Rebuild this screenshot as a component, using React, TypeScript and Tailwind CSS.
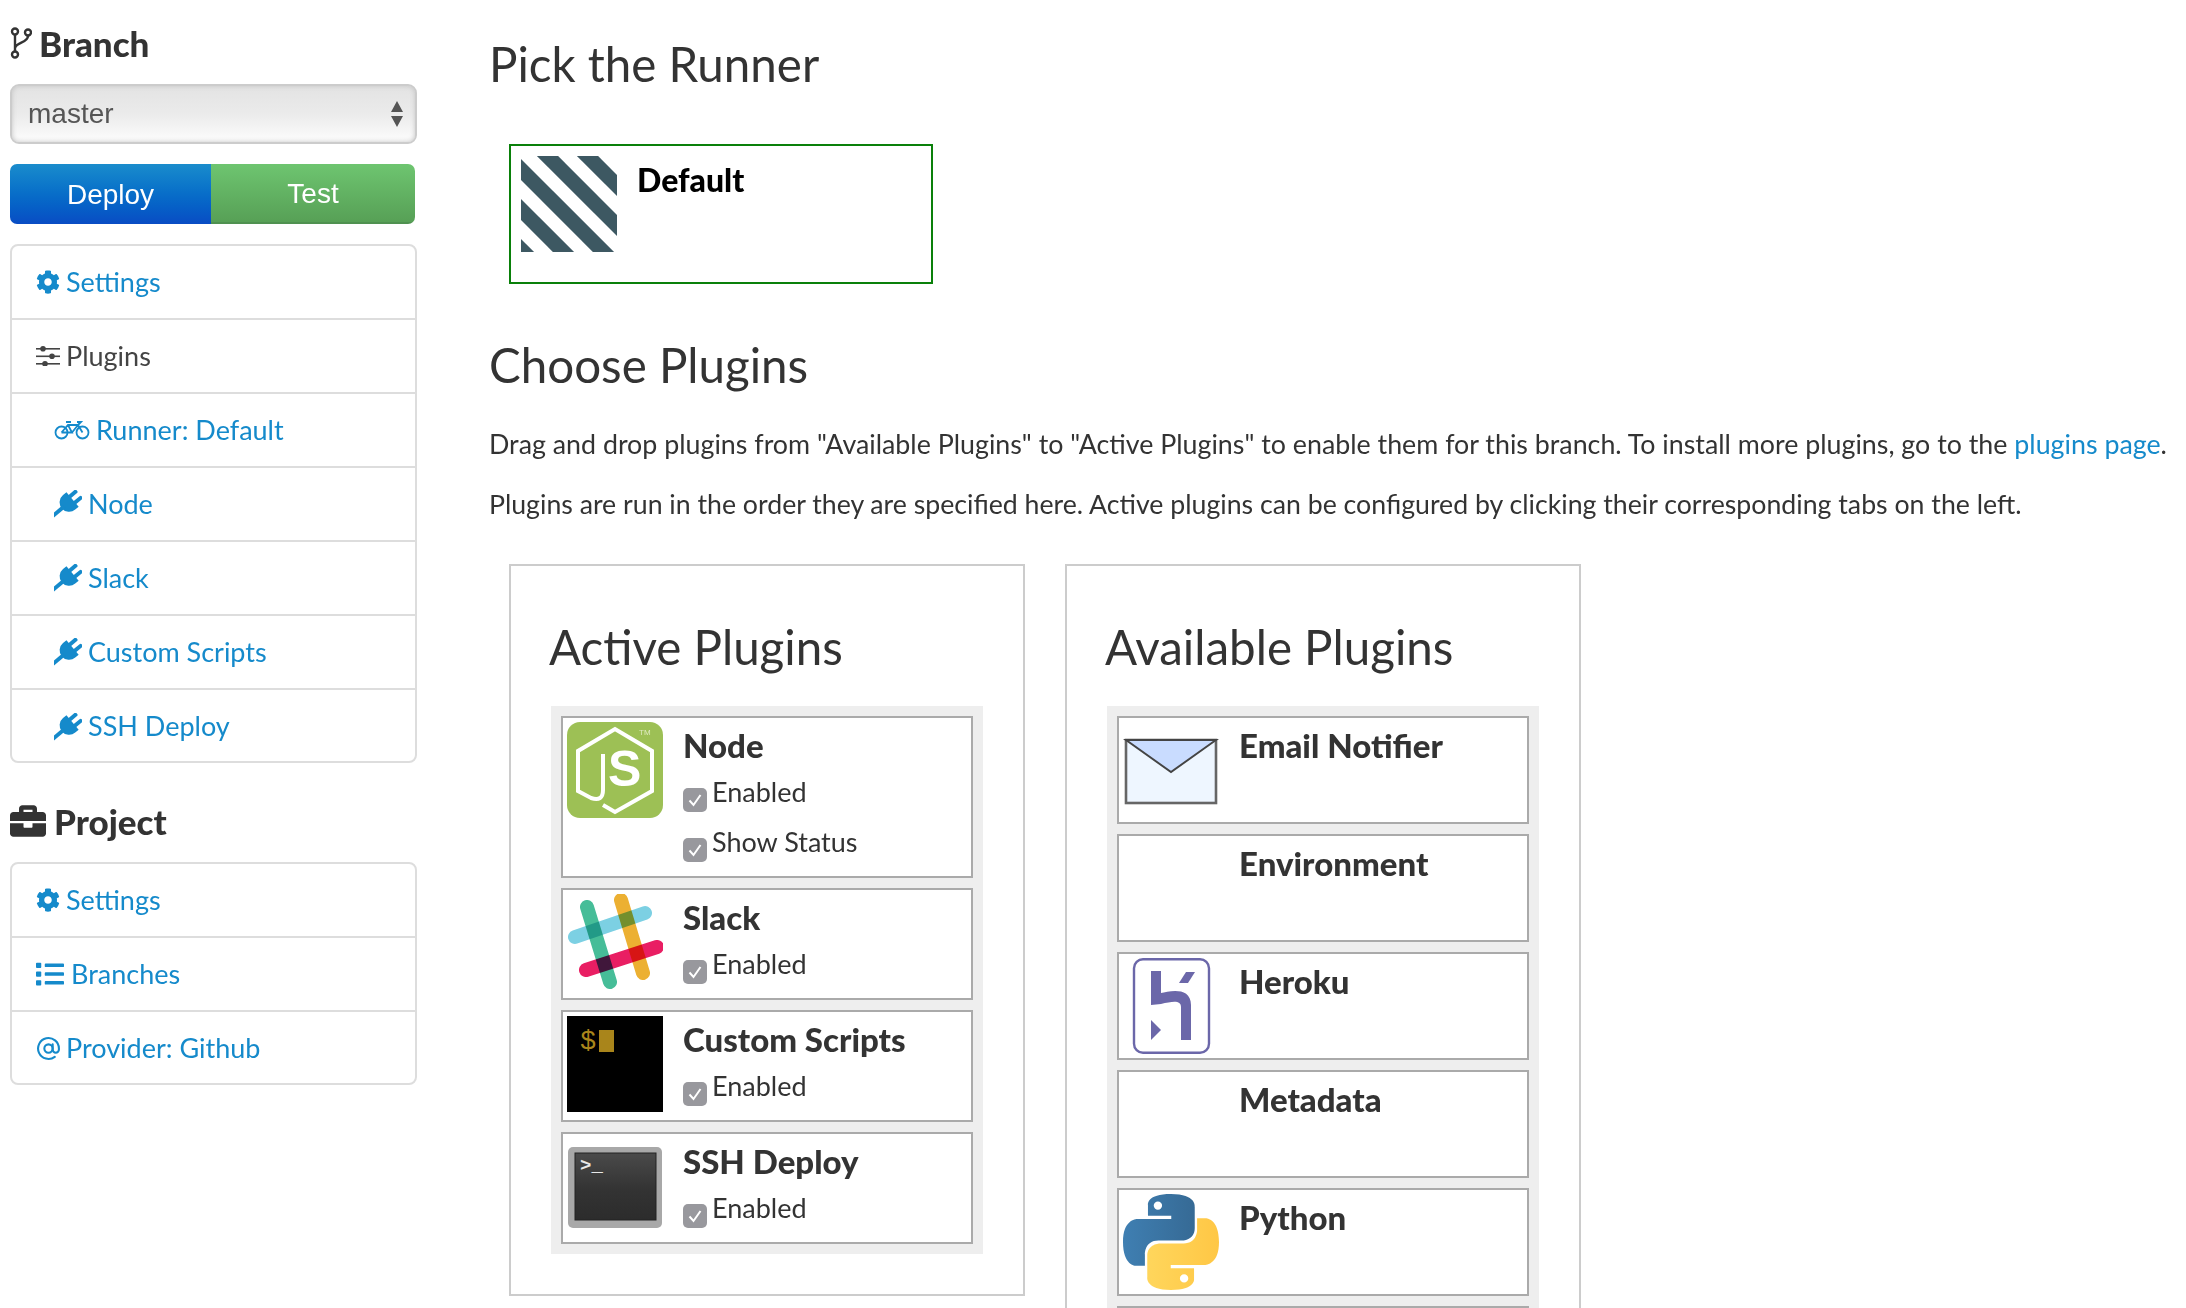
import { ReactNode } from "react";
import { FaBriefcase, FaCog, FaList } from "react-icons/fa";
import { AtSign } from "lucide-react";

const BranchIcon = () => (
  <svg width="22" height="32" viewBox="0 0 22 32" fill="none" stroke="#333" strokeWidth="2.4" className="shrink-0">
    <circle cx="5" cy="4.5" r="3" />
    <circle cx="18" cy="5.5" r="3" />
    <circle cx="5" cy="27.5" r="3" />
    <path d="M5 8V24M18 9C18 16 6 15 5 21" />
  </svg>
);

const SlidersIcon = () => (
  <svg width="24" height="20" viewBox="0 0 24 20" className="shrink-0" fill="#444">
    <rect x="0" y="2" width="24" height="1.6" />
    <rect x="0" y="9.5" width="24" height="1.6" />
    <rect x="0" y="17" width="24" height="1.6" />
    <circle cx="7" cy="2.8" r="2.8" />
    <circle cx="16" cy="10.3" r="2.8" />
    <circle cx="9" cy="17.8" r="2.8" />
  </svg>
);

const BikeIcon = () => (
  <svg width="36" height="20" viewBox="0 0 36 20" fill="none" stroke="#158acb" strokeWidth="1.8" className="shrink-0">
    <circle cx="7.5" cy="12.5" r="6" />
    <circle cx="28.5" cy="12.5" r="6" />
    <path d="M7.5 12.5L14 5H24L28.5 12.5M14 5L18 12.5H7.5M18 12.5L24 5M12 2H17M23 2H27L24 5" />
  </svg>
);

const PlugIcon = () => (
  <svg width="28" height="28" viewBox="0 0 28 28" fill="#158acb" className="shrink-0">
    <g transform="translate(15.5 12) rotate(50)">
      <path d="M-9.5 -4H9.5V0.5A9.5 9.5 0 0 1 -9.5 0.5Z" />
      <rect x="-6" y="-13" width="4" height="11" rx="1.5" />
      <rect x="2" y="-13" width="4" height="11" rx="1.5" />
      <rect x="-2" y="7" width="4" height="15" />
    </g>
  </svg>
);

const Stripes = () => (
  <svg width="96" height="96" viewBox="0 0 96 96" className="shrink-0" stroke="#3d5862" strokeWidth="15">
    {[-93.5, -53.5, -13.5, 26.5, 66.5].map((c) => (
      <line key={c} x1={c - 20} y1={-20} x2={c + 116} y2={116} />
    ))}
  </svg>
);

const NodeLogo = () => (
  <svg width="96" height="96" viewBox="0 0 96 96" className="shrink-0">
    <rect width="96" height="96" rx="13" fill="#9dc055" />
    <path d="M36 83L48 90L85 69V29L48 7L11 29V69L24 76Q36 80 36 68V32" fill="none" stroke="#fff" strokeWidth="4" />
    <text x="41" y="64" fill="#fff" fontSize="50" fontWeight="700" fontFamily="Liberation Sans, sans-serif">S</text>
    <text x="72" y="13" fill="#dfeac0" fontSize="8" fontFamily="Liberation Sans, sans-serif">TM</text>
  </svg>
);

const SlackLogo = () => (
  <svg width="96" height="96" viewBox="0 0 96 96" fill="none" strokeWidth="14" strokeLinecap="round" className="shrink-0">
    <path d="M8 43L78 19" stroke="#7cd0e3" />
    <path className="mix-blend-multiply" d="M20 13L43 88" stroke="#46bd98" />
    <path className="mix-blend-multiply" d="M54 6L76 79" stroke="#ecb032" />
    <path className="mix-blend-multiply" d="M19 76L90 53" stroke="#e91e63" />
  </svg>
);

const ScriptsLogo = () => (
  <svg width="96" height="96" viewBox="0 0 96 96" className="shrink-0">
    <rect width="96" height="96" fill="#000" />
    <text x="13" y="33" fill="#a9851b" fontSize="27" fontFamily="Liberation Mono, monospace">$</text>
    <rect x="32" y="14" width="15" height="22" fill="#a9851b" />
  </svg>
);

const TerminalLogo = () => (
  <svg width="96" height="96" viewBox="0 0 96 96" className="shrink-0">
    <defs>
      <linearGradient id="term" x1="0" y1="0" x2="0" y2="1">
        <stop offset="0" stopColor="#4a4a4a" />
        <stop offset="0.55" stopColor="#333" />
        <stop offset="1" stopColor="#2c2c2c" />
      </linearGradient>
    </defs>
    <rect x="1" y="9" width="94" height="81" rx="5" fill="#a8a8a8" />
    <rect x="8" y="15" width="81" height="67" fill="url(#term)" stroke="#222" />
    <text x="13" y="33" fill="#e8e8e8" fontSize="19" fontWeight="700" fontFamily="Liberation Mono, monospace">&gt;_</text>
  </svg>
);

const EmailLogo = () => (
  <svg width="96" height="96" viewBox="0 0 96 96" className="shrink-0">
    <rect x="3" y="18" width="90" height="63" fill="#eef6ff" stroke="#666" strokeWidth="2.6" />
    <path d="M3 18L48 50L93 18Z" fill="#c9dcff" stroke="#444" strokeWidth="2" />
  </svg>
);

const HerokuLogo = () => (
  <svg width="96" height="96" viewBox="0 0 96 96" fill="#6b67a9" className="shrink-0">
    <rect x="11" y="1.2" width="75" height="93.6" rx="9" fill="none" stroke="#6b67a9" strokeWidth="2.4" />
    <path d="M28 13H38V35C46 33 68 28 68 47V82H58V49C58 42 50 43 38 46L28 47Z" />
    <path d="M56 25L63 14H72L65 25Z" />
    <path d="M28 62L38 72L28 82Z" />
  </svg>
);

const PythonLogo = () => (
  <svg width="96" height="96" viewBox="0 0 110 110" className="shrink-0">
    <defs>
      <linearGradient id="pyb" x1="0" y1="0" x2="1" y2="0">
        <stop offset="0" stopColor="#3f7fb2" />
        <stop offset="1" stopColor="#366a95" />
      </linearGradient>
      <linearGradient id="pyy" x1="0" y1="0" x2="1" y2="0">
        <stop offset="0" stopColor="#ffc745" />
        <stop offset="1" stopColor="#ffd65c" />
      </linearGradient>
    </defs>
    <path
      fill="url(#pyb)"
      fillRule="evenodd"
      d="M54.9 0c-28 0-26.3 12.2-26.3 12.2v12.6h26.7v3.8H18S0 26.5 0 54.9c0 28.4 15.7 27.4 15.7 27.4h9.4V69.1s-.5-15.7 15.5-15.7h26.6s15 .2 15-14.5V14.6S84.5 0 54.9 0zM40 8.5a4.8 4.8 0 1 1 0 9.6 4.8 4.8 0 0 1 0-9.6z"
    />
    <path
      transform="rotate(180 55 55)"
      fill="url(#pyy)"
      fillRule="evenodd"
      d="M54.9 0c-28 0-26.3 12.2-26.3 12.2v12.6h26.7v3.8H18S0 26.5 0 54.9c0 28.4 15.7 27.4 15.7 27.4h9.4V69.1s-.5-15.7 15.5-15.7h26.6s15 .2 15-14.5V14.6S84.5 0 54.9 0zM40 8.5a4.8 4.8 0 1 1 0 9.6 4.8 4.8 0 0 1 0-9.6z"
    />
  </svg>
);

const Check = ({ label }: { label: string }) => (
  <div className="flex items-center h-[44px] mb-[6px]">
    <span className="w-[24px] h-[24px] mt-[16px] mr-[5px] rounded-[5px] bg-[#98989d] flex items-center justify-center shrink-0">
      <svg width="16" height="16" viewBox="0 0 16 16" fill="none" stroke="#fff" strokeWidth="2">
        <path d="M2.5 8.5L6.5 13L13.5 3" />
      </svg>
    </span>
    <span className="text-[27px] text-[#333]">{label}</span>
  </div>
);

const PluginCard = ({ name, logo, checks = [], h }: { name?: string; logo?: ReactNode; checks?: string[]; h: string }) => (
  <div className={`${h} border-2 border-[#aaa] bg-white p-[4px] flex`}>
    <div className="w-[96px] h-[96px] shrink-0">{logo}</div>
    <div className="ml-[20px] min-w-0">
      <div className="h-[48px] flex items-center text-[33px] font-black text-[#333] whitespace-nowrap">{name}</div>
      {checks.map((c) => (
        <Check key={c} label={c} />
      ))}
    </div>
  </div>
);

const PluginPanel = ({ title, children }: { title: string; children: ReactNode }) => (
  <div className="self-start w-[516px] border-2 border-[#ccc] pt-[48px] pl-[40px] pr-[40px] pb-[40px] shrink-0">
    <h2 className="h-[65px] flex items-center -ml-[2px] text-[47.5px] text-[#333] whitespace-nowrap">{title}</h2>
    <div className="mt-[27px] bg-[#eee] p-[10px] flex flex-col gap-[10px]">{children}</div>
  </div>
);

const NavRow = ({ icon, label, indent, active, gap }: { icon: ReactNode; label: string; indent?: boolean; active?: boolean; gap: string }) => (
  <div
    className={`h-[74px] last:h-[71px] last:pt-[2px] flex items-center border-b-2 border-[#ddd] last:border-b-0 ${indent ? "pl-[42px]" : "pl-[24px]"} ${active ? "text-[#444]" : "text-[#158acb]"} text-[27px] ${gap}`}
  >
    {icon}
    <span>{label}</span>
  </div>
);

const App = () => {
  return (
    <div className="w-[2186px] h-[1308px] overflow-hidden bg-white flex font-['Lato',sans-serif]">
      {/* sidebar */}
      <div className="w-[489px] shrink-0 pl-[10px]">
        <div className="w-[407px]">
          <div className="mt-[19px] h-[48px] flex items-center gap-[7px] text-[35px] font-black text-[#333]">
            <BranchIcon />
            Branch
          </div>
          <div className="mt-[17px] h-[60px] rounded-[9px] border-2 border-[#ccc] bg-linear-to-b from-[#e3e3e3] via-[#ebebeb] to-[#fdfdfd] shadow-[inset_0_0_5px_#c4c4c4] flex items-center justify-between pl-[16px] pr-[11px] font-['Liberation_Sans',sans-serif] text-[28px] text-[#555]">
            master
            <svg width="14" height="28" viewBox="0 0 14 28" fill="#555">
              <path d="M7 1L13 12H1ZM1 16H13L7 27Z" />
            </svg>
          </div>
          <div className="mt-[20px] w-[405px] h-[60px] flex font-['Liberation_Sans',sans-serif] text-[28px] text-white rounded-[7px] overflow-hidden">
            <div className="w-[201px] pt-[2px] flex items-center justify-center bg-linear-to-b from-[#1a8ccc] to-[#0a4cc4]">Deploy</div>
            <div className="flex-1 pt-[2px] flex items-center justify-center bg-linear-to-b from-[#6ec570] to-[#57a056] border-b-2 border-[#4f9150]">Test</div>
          </div>
          <div className="mt-[20px] border-2 border-[#ddd] rounded-[8px]">
            <NavRow icon={<FaCog size={24} />} label="Settings" gap="gap-[6px]" />
            <NavRow icon={<SlidersIcon />} label="Plugins" active gap="gap-[6px]" />
            <NavRow icon={<BikeIcon />} label="Runner: Default" indent gap="gap-[6px]" />
            <NavRow icon={<PlugIcon />} label="Node" indent gap="gap-[6px]" />
            <NavRow icon={<PlugIcon />} label="Slack" indent gap="gap-[6px]" />
            <NavRow icon={<PlugIcon />} label="Custom Scripts" indent gap="gap-[6px]" />
            <NavRow icon={<PlugIcon />} label="SSH Deploy" indent gap="gap-[6px]" />
          </div>
          <div className="mt-[34px] h-[48px] flex items-center gap-[8px] text-[35px] font-black text-[#333]">
            <FaBriefcase size={36} />
            Project
          </div>
          <div className="mt-[17px] border-2 border-[#ddd] rounded-[8px]">
            <NavRow icon={<FaCog size={24} />} label="Settings" gap="gap-[6px]" />
            <NavRow icon={<FaList size={28} />} label="Branches" gap="gap-[7px]" />
            <NavRow icon={<AtSign size={25} strokeWidth={2} />} label="Provider: Github" gap="gap-[5px]" />
          </div>
        </div>
      </div>

      {/* main */}
      <div className="flex-1 min-w-0">
        <h2 className="mt-[31px] h-[66px] flex items-center text-[47.5px] text-[#333]">Pick the Runner</h2>
        <div className="mt-[47px] ml-[20px] w-[424px] h-[140px] border-2 border-[#0a800a] p-[10px] flex">
          <Stripes />
          <div className="ml-[20px] h-[48px] flex items-center text-[32px] font-black text-black">Default</div>
        </div>
        <h2 className="mt-[48px] h-[66px] flex items-center text-[47.5px] text-[#333]">Choose Plugins</h2>
        <p className="mt-[16px] h-[60px] flex items-center text-[26.8px] text-[#333] whitespace-pre">
          Drag and drop plugins from "Available Plugins" to "Active Plugins" to enable them for this branch. To install more plugins, go to the <span className="text-[#158acb]">plugins page</span>.
        </p>
        <p className="h-[60px] flex items-center text-[26.7px] text-[#333] whitespace-nowrap">
          Plugins are run in the order they are specified here. Active plugins can be configured by clicking their corresponding tabs on the left.
        </p>
        <div className="mt-[30px] ml-[20px] flex gap-[40px]">
          <PluginPanel title="Active Plugins">
            <PluginCard h="h-[162px]" name="Node" logo={<NodeLogo />} checks={["Enabled", "Show Status"]} />
            <PluginCard h="h-[112px]" name="Slack" logo={<SlackLogo />} checks={["Enabled"]} />
            <PluginCard h="h-[112px]" name="Custom Scripts" logo={<ScriptsLogo />} checks={["Enabled"]} />
            <PluginCard h="h-[112px]" name="SSH Deploy" logo={<TerminalLogo />} checks={["Enabled"]} />
          </PluginPanel>
          <PluginPanel title="Available Plugins">
            <PluginCard h="h-[108px]" name="Email Notifier" logo={<EmailLogo />} />
            <PluginCard h="h-[108px]" name="Environment" />
            <PluginCard h="h-[108px]" name="Heroku" logo={<HerokuLogo />} />
            <PluginCard h="h-[108px]" name="Metadata" />
            <PluginCard h="h-[108px]" name="Python" logo={<PythonLogo />} />
            <PluginCard h="h-[108px]" />
          </PluginPanel>
        </div>
      </div>
    </div>
  );
};

export default App;
